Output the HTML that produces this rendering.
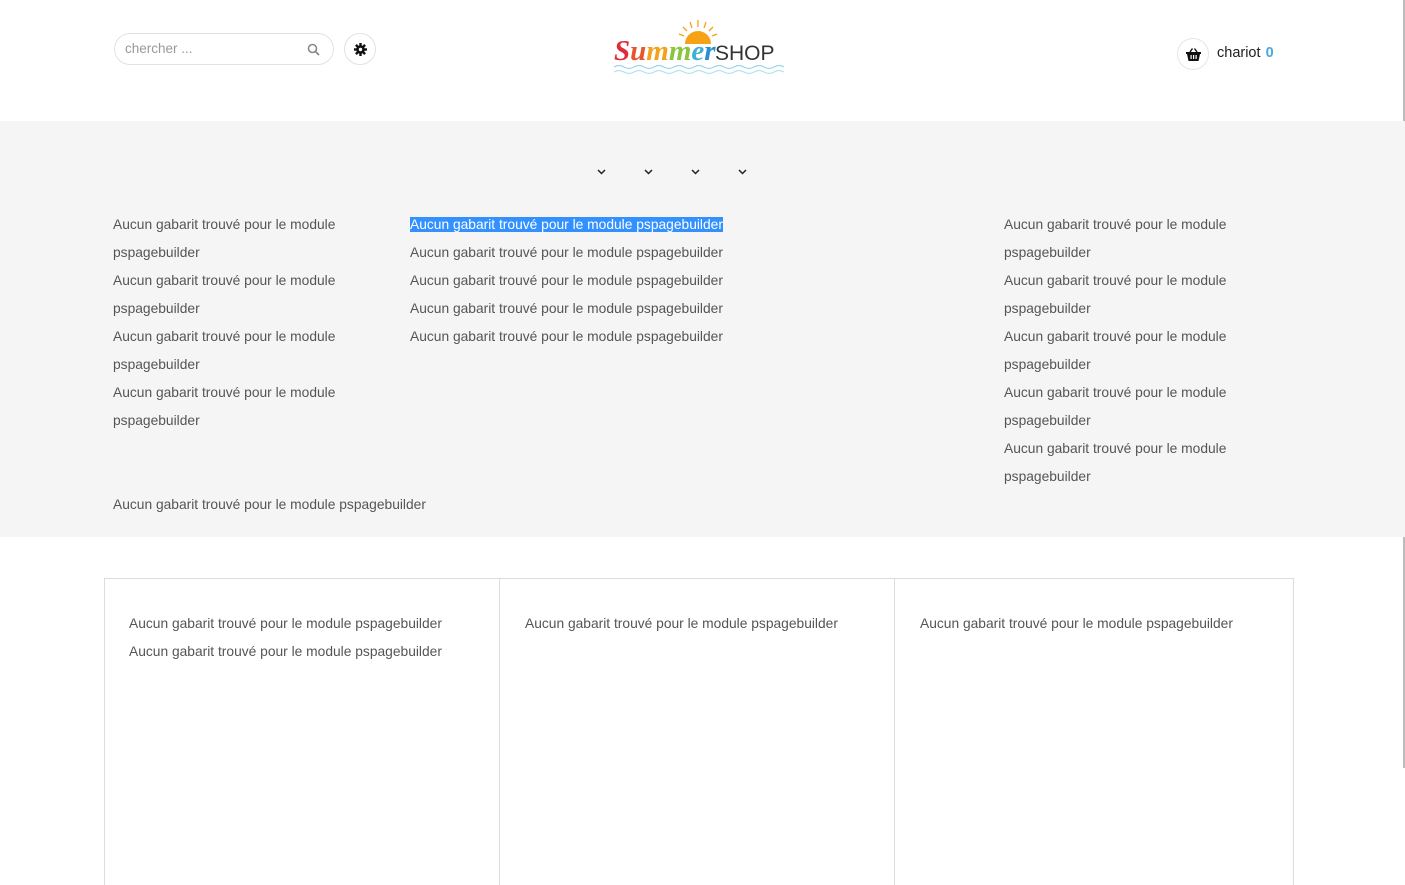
<!DOCTYPE html>
<html style="width:1405px;height:885px;overflow:hidden"><head><meta charset="utf-8">
<style>
*{margin:0;padding:0;box-sizing:border-box}
body{width:1405px;height:885px;overflow:hidden;background:#fff;font-family:"Liberation Sans",sans-serif;color:#555;position:relative}
.a{position:absolute}
.t{font-size:13.8px;line-height:28px;color:#555;white-space:nowrap}
.search{left:114px;top:33px;width:220px;height:32px;border:1px solid #e2e2e2;border-radius:16px}
.search span{position:absolute;left:10px;top:7px;font-size:13.5px;color:#999}
.gear{left:344px;top:33px;width:32px;height:32px;border:1px solid #e2e2e2;border-radius:50%}
.cart{left:1177px;top:38px;width:32px;height:32px;border:1px solid #e6e6e6;border-radius:50%}
.band{left:0;top:121px;width:1405px;height:416px;background:#f5f5f5}
.sel{background:#3390ff;color:#fff}
.box{top:578px;height:307px;border:1px solid #ddd;border-bottom:none}
</style></head><body>
<div class="a search"><span>chercher ...</span>
<svg class="a" style="left:192px;top:9px" width="13" height="13" viewBox="0 0 13 13"><circle cx="5.5" cy="5.5" r="4" fill="none" stroke="#888" stroke-width="1.6"/><line x1="8.5" y1="8.5" x2="12" y2="12" stroke="#888" stroke-width="1.8"/></svg></div>
<div class="a gear"><svg class="a" style="left:9px;top:9px" width="13" height="13" viewBox="0 0 13 13"><g fill="#111"><circle cx="6.5" cy="6.5" r="4.3"/><rect x="5.3" y="0" width="2.4" height="13"/><rect x="0" y="5.3" width="13" height="2.4"/><rect x="5.3" y="0" width="2.4" height="13" transform="rotate(45 6.5 6.5)"/><rect x="5.3" y="0" width="2.4" height="13" transform="rotate(-45 6.5 6.5)"/></g><circle cx="6.5" cy="6.5" r="1.7" fill="#fff"/></svg></div>

<svg class="a" style="left:612px;top:18px" width="175" height="62" viewBox="0 0 175 62">
<path d="M73 26 A13 13 0 0 1 99 26 Z" fill="#f5a314"/>
<g stroke="#f5a314" stroke-width="1.3"><line x1="86" y1="2" x2="86" y2="9"/><line x1="78" y1="4" x2="80" y2="10"/><line x1="94" y1="4" x2="92" y2="10"/><line x1="71" y1="9" x2="75" y2="13"/><line x1="101" y1="9" x2="97" y2="13"/><line x1="67" y1="16" x2="72" y2="18"/><line x1="105" y1="16" x2="100" y2="18"/></g>
<path d="M2 49 q5 -3 10 0 t10 0 t10 0 t10 0 t10 0 t10 0 t10 0 t10 0 t10 0 t10 0 t10 0 t10 0 t10 0 t10 0 t10 0 t10 0 t10 0" fill="none" stroke="#9fd3ea" stroke-width="1.2"/>
<path d="M2 54 q5 -3 10 0 t10 0 t10 0 t10 0 t10 0 t10 0 t10 0 t10 0 t10 0 t10 0 t10 0 t10 0 t10 0 t10 0 t10 0 t10 0 t10 0" fill="none" stroke="#b7e0ef" stroke-width="1.2"/>
<text x="2" y="42" font-family="Liberation Serif,serif" font-style="italic" font-weight="bold" font-size="29"><tspan fill="#e02b3a">S</tspan><tspan fill="#e8552c">u</tspan><tspan fill="#f2a21c">m</tspan><tspan fill="#8cc43e">m</tspan><tspan fill="#3cb0d8">e</tspan><tspan fill="#2a8fd0">r</tspan></text>
<text x="103" y="42" font-family="Liberation Sans,sans-serif" font-size="21" fill="#333">SHOP</text>
</svg>

<div class="a cart"><svg class="a" style="left:8px;top:9px" width="15" height="13" viewBox="0 0 15 13"><path d="M0 4h15v2h-1l-1.5 7h-10L1 6H0z" fill="#111"/><path d="M4 4 L6.5 0.5 M11 4 L8.5 0.5" stroke="#111" stroke-width="1.4"/><g fill="#fff"><rect x="4.5" y="7" width="1.2" height="4"/><rect x="7" y="7" width="1.2" height="4"/><rect x="9.5" y="7" width="1.2" height="4"/></g></svg></div>
<div class="a" style="left:1217px;top:45px;font-size:14.5px;color:#222">chariot <span style="color:#4aa8e0;font-weight:bold;margin-left:1px">0</span></div>

<div class="a" style="left:1403px;top:0;width:2px;height:768px;background:#bbb"></div>

<div class="a band"></div>
<svg class="a" style="left:597px;top:168px" width="150" height="8" viewBox="0 0 150 8" fill="none" stroke="#222" stroke-width="1.5"><path d="M1 2l3.5 3.5L8 2"/><path d="M48 2l3.5 3.5L55 2"/><path d="M95 2l3.5 3.5L102 2"/><path d="M142 2l3.5 3.5L149 2"/></svg>

<div class="a t" style="left:113px;top:211px">Aucun gabarit trouvé pour le module<br>pspagebuilder<br>Aucun gabarit trouvé pour le module<br>pspagebuilder<br>Aucun gabarit trouvé pour le module<br>pspagebuilder<br>Aucun gabarit trouvé pour le module<br>pspagebuilder</div>
<div class="a t" style="left:410px;top:211px"><span class="sel">Aucun gabarit trouvé pour le module pspagebuilder</span><br>Aucun gabarit trouvé pour le module pspagebuilder<br>Aucun gabarit trouvé pour le module pspagebuilder<br>Aucun gabarit trouvé pour le module pspagebuilder<br>Aucun gabarit trouvé pour le module pspagebuilder</div>
<div class="a t" style="left:1004px;top:211px">Aucun gabarit trouvé pour le module<br>pspagebuilder<br>Aucun gabarit trouvé pour le module<br>pspagebuilder<br>Aucun gabarit trouvé pour le module<br>pspagebuilder<br>Aucun gabarit trouvé pour le module<br>pspagebuilder<br>Aucun gabarit trouvé pour le module<br>pspagebuilder</div>
<div class="a t" style="left:113px;top:491px">Aucun gabarit trouvé pour le module pspagebuilder</div>

<div class="a box" style="left:104px;width:396px"></div>
<div class="a box" style="left:499px;width:396px"></div>
<div class="a box" style="left:894px;width:400px"></div>
<div class="a t" style="left:129px;top:610px">Aucun gabarit trouvé pour le module pspagebuilder<br>Aucun gabarit trouvé pour le module pspagebuilder</div>
<div class="a t" style="left:525px;top:610px">Aucun gabarit trouvé pour le module pspagebuilder</div>
<div class="a t" style="left:920px;top:610px">Aucun gabarit trouvé pour le module pspagebuilder</div>
</body></html>
